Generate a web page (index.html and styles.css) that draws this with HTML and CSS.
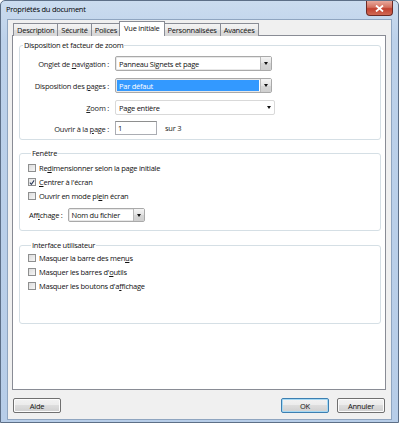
FILE: index.html
```html
<!DOCTYPE html>
<html lang="fr">
<head>
<meta charset="utf-8">
<title>Propriétés du document</title>
<link rel="stylesheet" href="styles.css">
</head>
<body>
<div class="window">
  <div class="titlebar">
    <span class="title">Propriétés du document</span>
    <div class="close"><svg width="9" height="7" viewBox="0 0 9 7"><path d="M1 0.5 L8 6.5 M8 0.5 L1 6.5" stroke="#fff" stroke-width="1.8"/></svg></div>
  </div>
  <div class="client">
    <div class="tabs">
      <div class="tab">Description</div>
      <div class="tab">Sécurité</div>
      <div class="tab">Polices</div>
      <div class="tab active">Vue initiale</div>
      <div class="tab">Personnalisées</div>
      <div class="tab">Avancées</div>
    </div>
    <div class="panel">
      <fieldset class="group g1">
        <legend>Disposition et facteur de zoom</legend>
        <div class="form">
          <label>Onglet de <u>n</u>avigation :</label>
          <div class="select"><span class="val">Panneau Signets et page</span><span class="dd"><i></i></span></div>
          <label>Disposition des <u>p</u>ages :</label>
          <div class="select sel"><span class="val">Par défaut</span><span class="dd"><i></i></span></div>
          <label><u>Z</u>oom :</label>
          <div class="select flat"><span class="val">Page entière</span><span class="dd"><i></i></span></div>
          <label>Ouvrir à la <u>p</u>age :</label>
          <div class="pagerow"><div class="input">1</div><span class="sur">sur 3</span></div>
        </div>
      </fieldset>
      <fieldset class="group g2">
        <legend>Fenêtre</legend>
        <div class="check"><span class="box"></span><span>Re<u>d</u>imensionner selon la page initiale</span></div>
        <div class="check"><span class="box on"><svg width="7" height="7" viewBox="0 0 7 7"><path d="M1 3.6 L2.8 5.6 L6 1" fill="none" stroke="#2a3a5a" stroke-width="1.2"/></svg></span><span><u>C</u>entrer à l'écran</span></div>
        <div class="check"><span class="box"></span><span>Ouvrir en mode pl<u>e</u>in écran</span></div>
        <div class="affrow"><span>Aff<u>i</u>chage :</span><div class="select small"><span class="val">Nom du fichier</span><span class="dd"><i></i></span></div></div>
      </fieldset>
      <fieldset class="group g3">
        <legend>Interface utilisateur</legend>
        <div class="check"><span class="box"></span><span>Masquer la barre des men<u>u</u>s</span></div>
        <div class="check"><span class="box"></span><span>Masquer les barres d'<u>o</u>utils</span></div>
        <div class="check"><span class="box"></span><span>Masquer les boutons d'a<u>f</u>fichage</span></div>
      </fieldset>
    </div>
    <div class="buttons">
      <button class="btn">Aide</button>
      <div class="right">
        <button class="btn default">OK</button>
        <button class="btn">Annuler</button>
      </div>
    </div>
  </div>
</div>
</body>
</html>
```
FILE: styles.css
```css
* { box-sizing: border-box; }
html, body { margin: 0; padding: 0; }
body {
  width: 400px; height: 423px;
  background: #ffffff;
  font-family: "Open Sans", "Noto Sans", sans-serif;
  font-size: 7.5px;
  letter-spacing: -0.25px;
  color: #111;
  overflow: hidden;
}
u { text-decoration: underline; text-underline-offset: 1px; }
.window {
  width: 399px; height: 423px;
  border: 1px solid #5d6f87;
  border-radius: 5px 5px 0 0;
  background: linear-gradient(#cbdcef, #bcd1ea 40px, #b7cde8);
  display: flex; flex-direction: column;
}
.titlebar {
  height: 18px;
  display: flex; align-items: center;
  padding-left: 5px;
}
.title { font-size: 7.5px; color: #000; flex: 1; margin-top: -2px; }
.close {
  width: 27px; height: 15px;
  margin-right: 5px; margin-top: -3px;
  border: 1px solid #6d2a24;
  border-top: none;
  border-radius: 0 0 4px 4px;
  background: linear-gradient(#e9a99c, #d3705f 45%, #c2412f 55%, #d06a55);
  display: flex; align-items: center; justify-content: center;
}
.client {
  flex: 1;
  margin: 0 6px 2px 6px;
  border: 1px solid #8fa5c0;
  background: #f0f0f0;
  padding: 1px 5px 0 4px;
  display: flex; flex-direction: column;
}
.tabs { display: flex; align-items: flex-end; height: 15px; position: relative; z-index: 1; margin-bottom: -1px; padding-left: 1px; }
.tab {
  height: 13px;
  padding: 0 3px;
  line-height: 12px;
  border: 1px solid #898c95;
  border-bottom: none;
  margin-right: -1px;
  background: linear-gradient(#f3f3f3, #ebebeb 50%, #dedede 50%, #d6d6d6);
  color: #111;
}
.tab.active {
  height: 15px;
  background: #ffffff;
  line-height: 13px;
  padding: 0 4px;
  margin: 0 0 0 -1px;
  position: relative;
}
.tab.active + .tab { margin-left: -1px; }
.panel {
  height: 355px;
  background: #fff;
  border: 1px solid #898c95;
  padding: 4px 4px 0 6px;
  display: flex; flex-direction: column;
}
.group {
  margin: 0;
  border: 1px solid #d5dfe5;
  border-radius: 3px;
  padding: 0;
  min-width: 0;
}
.group legend {
  padding: 0 1px;
  margin-left: 3px;
  line-height: 10px;
  color: #111;
}
.g1 { height: 100px; padding: 6px 0 0 0; }
.g2 { height: 83px; margin-top: 8px; padding: 5px 0 0 8px; }
.g3 { height: 84px; margin-top: 9px; padding: 3px 0 0 8px; }
.form {
  display: grid;
  grid-template-columns: 89px auto;
  column-gap: 6px;
  row-gap: 7px;
  align-items: center;
}
.form .pagerow { margin-top: -1px; }
.form label { text-align: right; color: #222; }
.select {
  position: relative;
  width: 157px; height: 15px;
  border: 1px solid #a9a9a9;
  border-radius: 2px;
  background: #fff;
  display: flex; align-items: center;
  box-shadow: inset 0 0 0 1px #e8e8e8;
}
.select .val { flex: 1; padding-left: 3px; white-space: nowrap; }
.select .dd {
  width: 11px; height: 13px;
  border-left: 1px solid #b8b8b8;
  background: linear-gradient(#f4f4f4, #e3e3e3 50%, #d6d6d6 50%, #cfcfcf);
  display: flex; align-items: center; justify-content: center;
}
.select .dd i {
  width: 0; height: 0;
  border-left: 2.5px solid transparent;
  border-right: 2.5px solid transparent;
  border-top: 3px solid #111;
}
.select.sel .val {
  background: #3399ff;
  color: #fff;
  align-self: stretch;
  margin: 1px;
  display: flex; align-items: center;
  padding-left: 2px;
}
.select.flat {
  width: 160px;
  border: 1px solid #d9d9d9;
  box-shadow: none;
}
.select.flat .dd { background: none; border-left: none; width: 10px; }
.pagerow { display: flex; align-items: center; }
.input {
  width: 42px; height: 14px;
  border: 1px solid #abadb3;
  border-top-color: #8e8f8f;
  padding-left: 2px;
  line-height: 12px;
  background: #fff;
}
.sur { margin-left: 8px; color: #222; }
.check {
  display: flex; align-items: center;
  height: 10px;
  margin-bottom: 4px;
}
.box {
  width: 8px; height: 8px;
  border: 1px solid #8e8f8f;
  background: linear-gradient(135deg, #dcdcdc, #f6f6f6);
  margin-right: 3px;
  display: flex; align-items: center; justify-content: center;
}
.box.on { background: linear-gradient(135deg, #e4e4e4, #fafafa); }
.affrow {
  display: flex; align-items: center;
  margin-top: 7px;
  padding-left: 1px;
}
.affrow span:first-child { margin-right: 5px; }
.select.small { width: 77px; height: 14px; }
.select.small .dd { height: 12px; }
.buttons {
  display: flex; align-items: center; justify-content: space-between;
  margin-top: 8px;
  padding-left: 1px;
  padding-right: 1px;
}
.right { display: flex; gap: 8px; }
.btn {
  font-family: inherit;
  font-size: 7.5px;
  letter-spacing: -0.25px;
  color: #111;
  width: 48px; height: 15px;
  padding: 0;
  border: 1px solid #707070;
  border-radius: 2px;
  background: linear-gradient(#f2f2f2, #ebebeb 50%, #dddddd 50%, #cfcfcf);
  box-shadow: inset 0 0 0 1px #fcfcfc;
}
.btn.default {
  border-color: #3c7fb1;
  box-shadow: inset 0 0 0 1px #a6d9f4;
}
```
